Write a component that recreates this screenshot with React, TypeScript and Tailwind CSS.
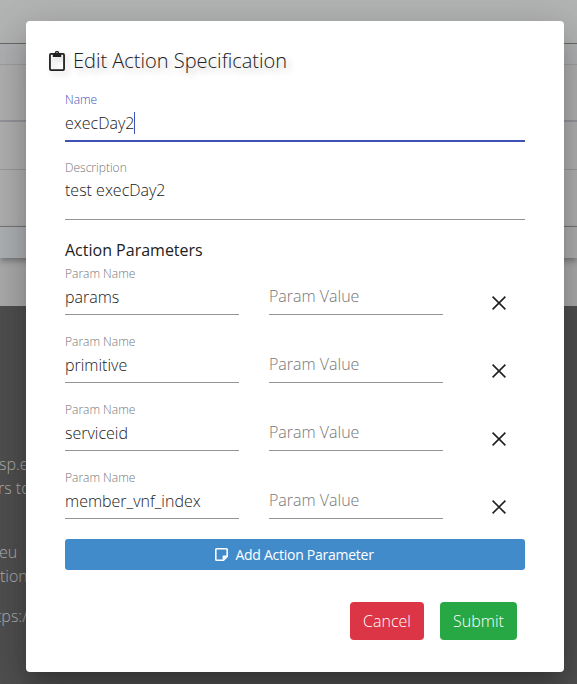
import React from "react";

const params = ["params", "primitive", "serviceid", "member_vnf_index"];

function ClipboardIcon() {
  return (
    <svg
      viewBox="0 0 16 20"
      className="mb-px mr-2 h-5 w-4 drop-shadow-[3px_3px_3px_rgba(0,0,0,0.18)]"
      fill="none"
    >
      <rect x="0.95" y="2.95" width="14.1" height="16.1" rx="1" stroke="currentColor" strokeWidth="1.8" />
      <path
        fillRule="evenodd"
        fill="currentColor"
        d="M3.8 2.2H5.7a2.3 2.3 0 0 1 4.6 0h1.9V6H3.8zM8 1.3a1 1 0 1 0 0 2 1 1 0 0 0 0-2z"
      />
    </svg>
  );
}

function NoteIcon() {
  return (
    <svg viewBox="0 0 13 13" className="size-[13px]" fill="none">
      <path
        d="M1.6.8h9.8a.8.8 0 0 1 .8.8v6.9l-3.7 3.7H1.6a.8.8 0 0 1-.8-.8V1.6a.8.8 0 0 1 .8-.8z"
        stroke="currentColor"
        strokeWidth="1.6"
      />
      <path d="M7.6 12.2V8.6a1 1 0 0 1 1-1h3.6z" fill="currentColor" />
    </svg>
  );
}

function CloseIcon() {
  return (
    <svg viewBox="0 0 14 14" className="ml-[49px] mt-[31px] size-[14px]">
      <path d="M.6.6l12.8 12.8M13.4.6L.6 13.4" stroke="currentColor" strokeWidth="1.6" />
    </svg>
  );
}

function ParamRow({ name }: { name: string }) {
  return (
    <div className="flex h-[68px]">
      <div className="h-[50px] w-[174px] border-b border-[#949494] pt-px">
        <div className="h-4 text-[12px] leading-4 text-[#757575]">Param Name</div>
        <div className="mt-[3px] h-6 text-[16px] leading-6">{name}</div>
      </div>
      <div className="ml-[30px] h-[50px] w-[174px] border-b border-[#949494] pt-[19px] text-[16px] leading-6 text-[#757575]">
        Param Value
      </div>
      <CloseIcon />
    </div>
  );
}

function Backdrop() {
  return (
    <div className="h-[684px] w-full">
      <div className="h-[43px] bg-[#b3b5b4]" />
      <div className="h-[22px] border-b border-t border-b-[#9ea0a4] border-t-[#6a6a6a] bg-[#b0b2b4]" />
      <div className="h-[57px] border-b-2 border-[#96979c] bg-[#b2b2b2]" />
      <div className="h-[48px] border-b border-[#9c9c9c] bg-[#b2b2b2]" />
      <div className="h-[57px] border-b border-[#7b7b7b] bg-[#b2b2b2]" />
      <div className="relative h-[31px] bg-linear-to-r from-[#b0b3b6] to-[#b0b0b0] shadow-[0_3px_6px_rgba(0,0,0,0.3)]" />
      <div className="h-[48px] bg-[#adadad]" />
      <div className="h-[378px] bg-[#505050] pt-[146px] text-[16px] leading-6 text-[#b2b2b2]">
        <p className="-ml-px">sp.eu</p>
        <p className="-ml-0.5">rs to</p>
        <p className="-ml-px mt-10">eu</p>
        <p>tion</p>
        <p className="-ml-1 mt-4">tps://</p>
      </div>
    </div>
  );
}

export default function App() {
  return (
    <div className="relative h-[684px] w-[577px] overflow-hidden font-['Open_Sans',sans-serif] font-light">
      <Backdrop />
      <section className="absolute left-[26px] top-[21px] h-[651px] w-[538px] rounded bg-white px-[39px] text-[#212121] shadow-[0_11px_15px_-7px_rgba(0,0,0,0.2),0_24px_38px_3px_rgba(0,0,0,0.14),0_9px_46px_8px_rgba(0,0,0,0.12)]">
        <h2 className="-ml-4 flex items-center pt-[25px] text-[20px] leading-[30px] [text-shadow:4px_4px_6px_rgba(0,0,0,0.25)]">
          <ClipboardIcon />
          Edit Action Specification
        </h2>
        <div className="mt-[15px] h-[51px] border-b-2 border-[#3f51b5] pt-px">
          <div className="h-4 text-[12px] leading-4 text-[#3f51b5]">Name</div>
          <div className="mt-[3px] flex h-6 items-center text-[16px] leading-6">
            execDay2
            <span className="h-[22px] w-px bg-[#3f51b5]" />
          </div>
        </div>
        <div className="mt-[18px] h-[60px] border-b border-[#949494]">
          <div className="h-4 text-[12px] leading-4 text-[#757575]">Description</div>
          <div className="mt-0.5 text-[16px] leading-6">test execDay2</div>
        </div>
        <h3 className="mt-[18px] h-[27px] text-[16px] font-normal leading-6">Action Parameters</h3>
        <div className="h-[274px]">
          {params.map((p) => (
            <ParamRow key={p} name={p} />
          ))}
        </div>
        <button className="flex h-[31px] w-full items-center justify-center gap-[7px] rounded-[3px] bg-[#428bca] pr-px text-[14px] font-normal tracking-[-0.26px] text-white">
          <NoteIcon />
          Add Action Parameter
        </button>
        <div className="mt-8 flex justify-end gap-4 pr-2 text-[16px] text-white">
          <button className="h-[38px] w-[74px] rounded bg-[#dc3545]">Cancel</button>
          <button className="h-[38px] w-[77px] rounded bg-[#28a745]">Submit</button>
        </div>
      </section>
    </div>
  );
}
